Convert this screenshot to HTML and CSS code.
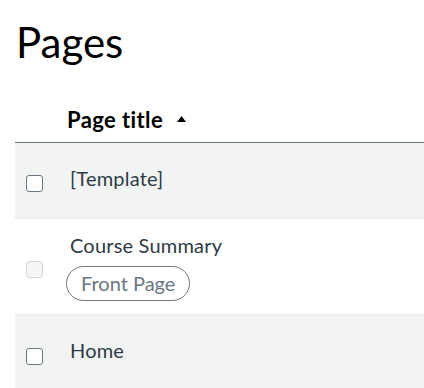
FILE: index.html
```html
<!DOCTYPE html>
<html lang="en">
<head>
    <meta charset="UTF-8">
    <meta name="viewport" content="width=device-width, initial-scale=1.0">
    <title>Pages</title>
    <link rel="stylesheet" href="styles.css">
</head>
<body>
    <div class="page">
        <h1 class="page-heading">Pages</h1>

        <div class="pages-table">
            <div class="table-head">
                <div class="cell-check"></div>
                <div class="head-title">
                    Page title
                    <svg class="sort-icon" width="9" height="6" viewBox="0 0 9 6">
                        <path d="M4.5 0 L9 6 L0 6 Z" fill="#000"/>
                    </svg>
                </div>
            </div>

            <div class="table-row striped">
                <div class="cell-check"><span class="checkbox"></span></div>
                <div class="cell-title">
                    <div class="page-link">[Template]</div>
                </div>
            </div>

            <div class="table-row">
                <div class="cell-check"><span class="checkbox disabled"></span></div>
                <div class="cell-title">
                    <div class="page-link">Course Summary</div>
                    <span class="front-pill">Front Page</span>
                </div>
            </div>

            <div class="table-row striped">
                <div class="cell-check"><span class="checkbox"></span></div>
                <div class="cell-title">
                    <div class="page-link">Home</div>
                </div>
            </div>
        </div>
    </div>
</body>
</html>
```

FILE: styles.css
```css
body {
    margin: 0;
    font-family: Lato, 'Liberation Sans', Arial, sans-serif;
    background-color: #ffffff;
    color: #2d3b45;
    overflow: hidden;
}

.page {
    padding-left: 15px;
}

.page-heading {
    margin: 17px 0 0 1px;
    font-size: 42px;
    font-weight: 400;
    line-height: 1.2;
    color: #000;
}

.pages-table {
    width: 460px;
}

.table-head {
    display: grid;
    grid-template-columns: 52px 1fr;
    padding: 37px 0 7px;
    border-bottom: 1px solid #6b7780;
}

.head-title {
    font-size: 22px;
    font-weight: bold;
    letter-spacing: 0.4px;
    line-height: 31px;
    color: #000;
    display: flex;
    align-items: center;
    gap: 14px;
}

.sort-icon {
    margin-top: -1px;
}

.table-row {
    display: grid;
    grid-template-columns: 52px 1fr;
    align-items: center;
    min-height: 76px;
    padding: 12px 0 13px;
    box-sizing: border-box;
    border-bottom: 1px solid #e8eaec;
}

.table-row.striped {
    background-color: #f2f4f4;
}

.table-row:last-child {
    border-bottom: none;
}

.cell-check {
    display: flex;
    padding-left: 11px;
}

.checkbox {
    width: 17px;
    height: 17px;
    box-sizing: border-box;
    border: 1px solid #6b7780;
    border-radius: 3px;
    background-color: #fff;
    margin-top: 7px;
}

.checkbox.disabled {
    border-color: #d5d9dc;
    background-color: #f5f5f5;
}

.cell-title {
    padding-left: 3px;
}

.page-link {
    font-size: 20px;
    letter-spacing: 0.2px;
    line-height: 28px;
    color: #2d3b45;
}

.page-link:only-child {
    margin-bottom: 5px;
}

.front-pill {
    display: inline-block;
    margin-top: 7px;
    margin-left: -4px;
    padding: 0 14px;
    height: 35px;
    line-height: 33px;
    box-sizing: border-box;
    border: 1px solid #6b7780;
    border-radius: 18px;
    font-size: 20px;
    color: #6b7780;
}
```
